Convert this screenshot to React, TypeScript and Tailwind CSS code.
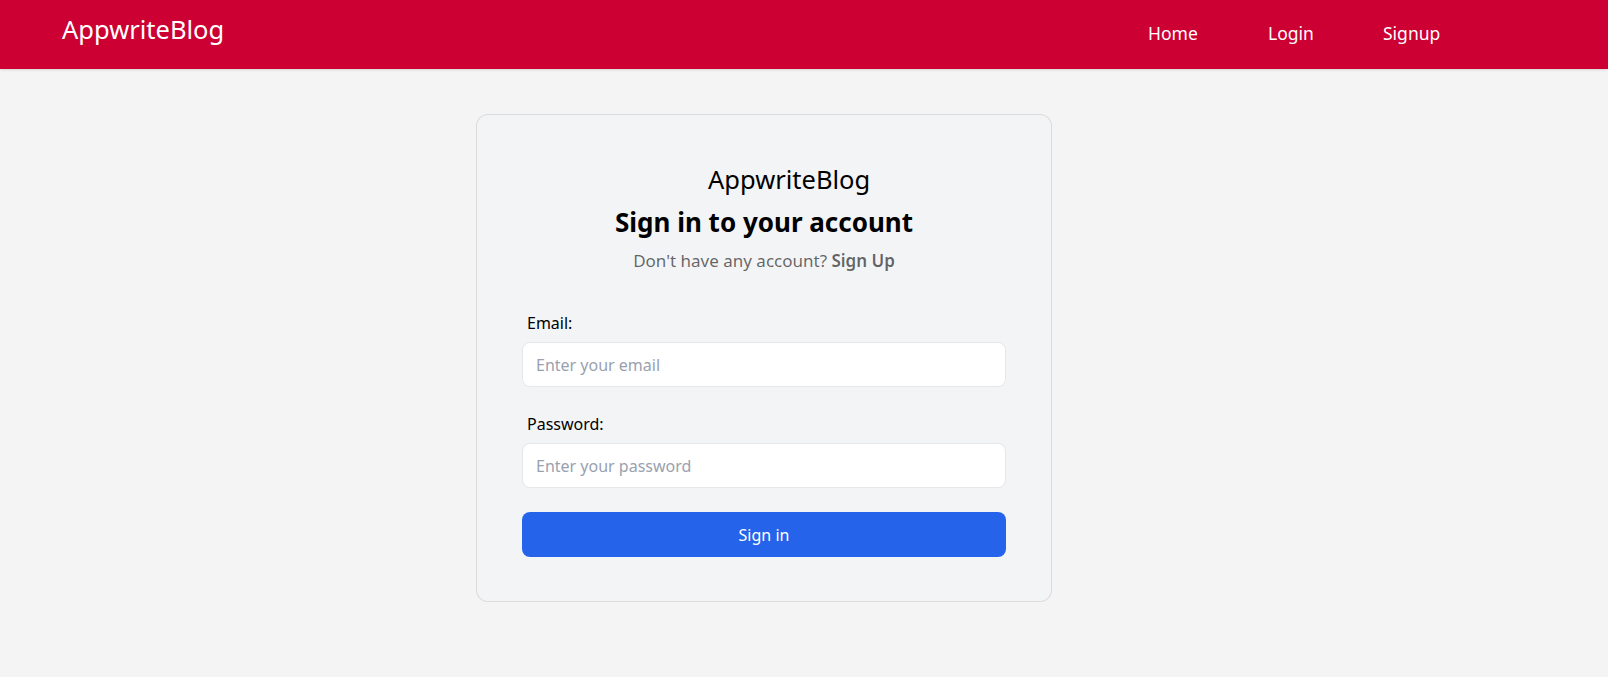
export default function App() {
  const navItems = [
    { label: 'Home', width: 'w-[120px]' },
    { label: 'Login', width: 'w-[115px]' },
    { label: 'Signup', width: 'w-[80px]' },
  ];

  return (
    <div className="min-h-[677px] bg-[#f4f4f4] font-['Noto_Sans',sans-serif]">
      {/* top bar */}
      <header className="h-[69px] bg-[#cc0033] shadow-sm flex items-start pl-[62px] pr-[145px]">
        <div className="mt-[13px] text-[25.5px] leading-[32px] text-white whitespace-nowrap">AppwriteBlog</div>
        <ul className="ml-auto mt-[19px] flex items-center">
          {navItems.map((item) => (
            <li key={item.label} className={item.width}>
              <button className="text-[17.5px] leading-[28px] text-white">{item.label}</button>
            </li>
          ))}
        </ul>
      </header>

      <div className="flex justify-center pr-[80px] pt-[45px]">
        <div className="w-[576px] bg-[#f3f4f6] rounded-xl border border-black/10 px-[45px] pt-[45px] pb-[44px]">
          <div className="flex justify-center">
            <span className="inline-block w-[112px] whitespace-nowrap text-[25.5px] leading-[39px] text-black">AppwriteBlog</span>
          </div>
          <h2 className="mt-[5px] text-center text-[26px] font-bold leading-[36px] text-black">Sign in to your account</h2>
          <p className="mt-[9px] text-center text-[17px] leading-[24px] text-black/60">
            Don&apos;t have any account? <span className="font-semibold">Sign Up</span>
          </p>

          <form className="mt-[38px]">
            <div>
              <label className="block mb-[7px] pl-[5px] text-base leading-6 text-black">Email:</label>
              <input
                type="email"
                placeholder="Enter your email"
                className="w-full h-[45px] px-[13px] rounded-lg bg-white text-black border border-gray-200 outline-none placeholder:text-gray-400"
              />
            </div>
            <div className="mt-[25px]">
              <label className="block mb-[7px] pl-[5px] text-base leading-6 text-black">Password:</label>
              <input
                type="password"
                placeholder="Enter your password"
                className="w-full h-[45px] px-[13px] rounded-lg bg-white text-black border border-gray-200 outline-none placeholder:text-gray-400"
              />
            </div>
            <button type="button" className="mt-6 w-full h-[45px] rounded-lg bg-[#2563eb] text-base text-white">
              Sign in
            </button>
          </form>
        </div>
      </div>
    </div>
  );
}
